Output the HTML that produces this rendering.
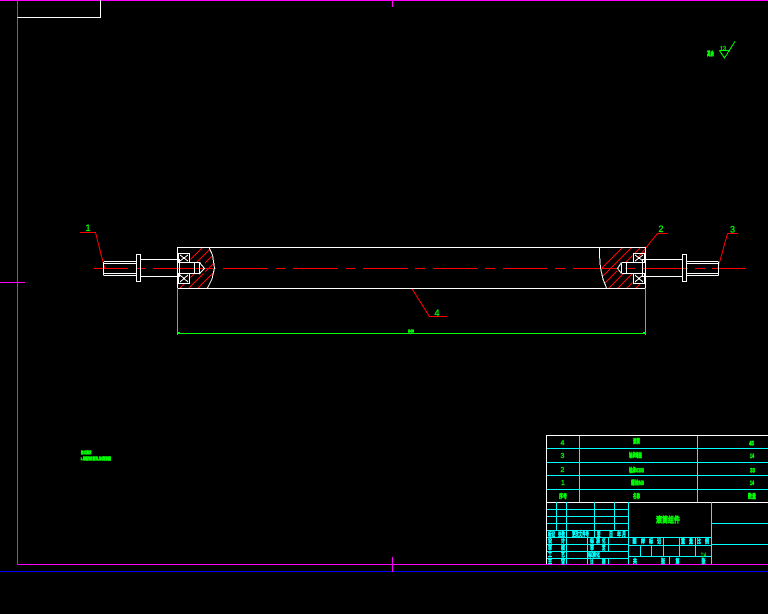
<!DOCTYPE html>
<html>
<head>
<meta charset="utf-8">
<style>
html,body{margin:0;padding:0;background:#000;width:768px;height:614px;overflow:hidden}
svg{display:block}
text{font-family:"Liberation Sans","Noto Sans CJK SC",sans-serif;font-weight:bold;text-anchor:start}
.g{fill:#0f0;stroke:#0f0;stroke-width:.55}
.c{fill:#0ff;stroke:#0ff;stroke-width:.5;font-size:6px}
.n{fill:#0f0;stroke:#0f0;stroke-width:.3;font-weight:normal;text-anchor:middle}
</style>
</head>
<body>
<svg width="768" height="614" viewBox="0 0 768 614" xmlns="http://www.w3.org/2000/svg">
<defs>
<clipPath id="hl"><path clip-rule="evenodd" d="M178 248H209L212 255L214.500 268L212 279L207.500 288H178ZM177 253H190.500V262.500H205V273.500H190.500V283.500H177Z"/></clipPath>
<clipPath id="hr"><path clip-rule="evenodd" d="M599 248H645V288H606.500L602.500 279L600.500 268L600 255ZM646 253H632.500V262.500H617V273.500H632.500V283.500H646Z"/></clipPath>
</defs>
<rect width="768" height="614" fill="#000"/>

<g fill="none" stroke-width="1" shape-rendering="crispEdges">
<!-- sheet frame -->
<path stroke="#00f" d="M0 571.500H768"/>
<path stroke="#f0f" d="M0 .5H768M17.500 0V564.500M17.500 564.500H768M392.500 0V7M392.500 557V572M0 282.500H25"/>
<path stroke="#fff" d="M17.500 17.500H100.500V0"/>

<!-- hatching -->
<g stroke="#f00" clip-path="url(#hl)">
<path d="M150 300L210 240M159 300L219 240M168 300L228 240M177 300L237 240M186 300L246 240M195 300L255 240M204 300L264 240"/>
</g>
<g stroke="#f00" clip-path="url(#hr)">
<path d="M570 300L630 240M579 300L639 240M588 300L648 240M597 300L657 240M606 300L666 240M615 300L675 240M624 300L684 240M633 300L693 240"/>
</g>

<!-- centre line -->
<path stroke="#f00" d="M94 268.500H128M137 268.500H146M153 268.500H216M223 268.500H268M276 268.500H285M293 268.500H338M346 268.500H355M363 268.500H408M415 268.500H425M433 268.500H478M485 268.500H495M503 268.500H547M555 268.500H565M573 268.500H617M625 268.500H635M643 268.500H688M695 268.500H705M712 268.500H746"/>

<!-- leaders -->
<path stroke="#f00" d="M80 232.500H95.500L104.500 268M657 233.500H667.500M657.500 233.500L638 257.500M727 233.500H738M727.500 233.500L718 268M411.500 288L429.500 316.500H447"/>

<!-- roller -->
<path stroke="#fff" d="M177.500 247.500H645.500M177.500 288.500H645.500M177.500 247V288M645.500 247V288"/>
<path stroke="#fff" d="M209 247.500L212.500 255L214.500 268L212 279L207.500 288"/>
<path stroke="#fff" d="M599.500 247.500L599.500 255L600.500 268L603 279L606.500 288"/>

<!-- left shaft -->
<path stroke="#fff" d="M104 261.500H136.500M104 263.500H136.500M104 273.500H136.500M104 275.500H136.500M103.500 262V275.500"/>
<rect stroke="#fff" x="136.500" y="254.500" width="4" height="27"/>
<path stroke="#fff" d="M141 259.500H179M141 276.500H179M179.500 259V277M179 262.500H200.500M179 273.500H200.500M194.500 262.500V273.500M199.500 262.500V273.500L204.500 268.500L199.500 262.500"/>
<rect stroke="#fff" x="178.500" y="253.500" width="11" height="9"/>
<rect stroke="#fff" x="178.500" y="273.500" width="11" height="10"/>
<path stroke="#fff" d="M180 255L188 261M188 255L180 261M180 275L188 282M188 275L180 282"/>

<!-- right shaft -->
<path stroke="#fff" d="M687 261.500H718.500M687 263.500H718.500M687 273.500H718.500M687 275.500H718.500M718.500 262V275.500"/>
<rect stroke="#fff" x="682.500" y="254.500" width="4" height="27"/>
<path stroke="#fff" d="M642 259.500H682M642 276.500H682M642.500 259V277M622 262.500H642M622 273.500H642M621.500 262.500V273.500M626.500 262.500V273.500M621.500 262.500L617.500 268.500L621.500 273.500"/>
<rect stroke="#fff" x="633.500" y="253.500" width="11" height="9"/>
<rect stroke="#fff" x="633.500" y="273.500" width="11" height="10"/>
<path stroke="#fff" d="M635 255L643 261M643 255L635 261M635 275L643 282M643 275L635 282"/>

<!-- dimension -->
<path stroke="#0f0" d="M177.500 289V335M645.500 289V335M177 333.500H646M178 332.500H180M643 332.500H645"/>

<!-- surface finish symbol -->
<path stroke="#0f0" d="M719.500 50.500H730M719.500 50.500L724.500 58L735 41.500"/>

<!-- parts list -->
<path stroke="#0ff" d="M579.500 435V502M697.500 435V502M547 448.500H768M547 462.500H768M547 475.500H768M547 489.500H768"/>
<path stroke="#fff" d="M546.500 435V564M546.500 435.500H768M546.500 502.500H768"/>

<!-- title block -->
<path stroke="#0ff" d="M547 509.500H628M547 516.500H628M547 523.500H628M547 530.500H628M547 537.500H628M547 544.500H628M547 551.500H628M547 558.500H628"/>
<path stroke="#0ff" d="M556.500 502V530M566.500 502V564M594.500 502V537M614.500 502V530M587.500 537V564M608.500 537V551M608.500 558V564M628.500 502V564M711.500 502V564"/>
<path stroke="#0ff" d="M628 537.500H711M628 545.500H711M628 556.500H711M663.500 537V556M679.500 537V556M695.500 537V556M640.500 545V556M651.500 545V556M669.500 556V564M711 523.500H768M711 544.500H768"/>
</g>

<!-- balloons -->
<text class="n" x="88" y="231" font-size="9">1</text>
<text class="n" x="661" y="232" font-size="9">2</text>
<text class="n" x="732.500" y="232.500" font-size="9">3</text>
<text class="n" x="437" y="316" font-size="9">4</text>

<!-- dim / annotation -->
<text class="g" x="408" y="332.500" font-size="4.500" textLength="6" lengthAdjust="spacingAndGlyphs">840</text>
<text class="g" x="707" y="56" font-size="6" textLength="7" lengthAdjust="spacingAndGlyphs">其余</text>
<text class="n" x="723" y="50.500" font-size="6.500" textLength="6" lengthAdjust="spacingAndGlyphs">13</text>
<text class="g" x="81" y="454" font-size="4" textLength="10.500" lengthAdjust="spacingAndGlyphs">技术要求</text>
<text class="g" x="80.500" y="460" font-size="4" textLength="30.500" lengthAdjust="spacingAndGlyphs">1.装配前清洗,涂润滑脂</text>

<!-- parts text -->
<g>
<text class="n" x="562.500" y="445" font-size="7">4</text>
<text class="g" x="633" y="443.500" font-size="6" textLength="7" lengthAdjust="spacingAndGlyphs">滚筒</text>
<text class="g" x="749" y="445.500" font-size="6" textLength="5" lengthAdjust="spacingAndGlyphs">45</text>
<text class="n" x="562.500" y="458" font-size="7">3</text>
<text class="g" x="629" y="457.500" font-size="6" textLength="13" lengthAdjust="spacingAndGlyphs">轴承端盖</text>
<text class="g" x="750" y="458" font-size="6" textLength="4" lengthAdjust="spacingAndGlyphs">14</text>
<text class="n" x="562.500" y="472" font-size="7">2</text>
<text class="g" x="629" y="472.500" font-size="6" textLength="15" lengthAdjust="spacingAndGlyphs">轴承6308</text>
<text class="g" x="750" y="472.500" font-size="6" textLength="5" lengthAdjust="spacingAndGlyphs">33</text>
<text class="n" x="563" y="485" font-size="7">1</text>
<text class="g" x="631" y="485" font-size="6" textLength="13" lengthAdjust="spacingAndGlyphs">螺栓M8</text>
<text class="g" x="750" y="485" font-size="6" textLength="4" lengthAdjust="spacingAndGlyphs">14</text>
<text class="g" x="559" y="498.500" font-size="6" textLength="8" lengthAdjust="spacingAndGlyphs">序号</text>
<text class="g" x="633" y="498.500" font-size="6" textLength="7" lengthAdjust="spacingAndGlyphs">名称</text>
<text class="g" x="748" y="498.500" font-size="6" textLength="8" lengthAdjust="spacingAndGlyphs">数量</text>
<text class="g" x="656" y="522.500" font-size="8" textLength="24" lengthAdjust="spacingAndGlyphs">滚筒组件</text>
<text class="n" x="703.500" y="557" font-size="6" textLength="5" lengthAdjust="spacingAndGlyphs">1:4</text>
</g>

<g>
<text class="c" x="548" y="536.500" textLength="7" lengthAdjust="spacingAndGlyphs">标记</text>
<text class="c" x="558" y="536.500" textLength="7" lengthAdjust="spacingAndGlyphs">处数</text>
<text class="c" x="572" y="536.500" textLength="17" lengthAdjust="spacingAndGlyphs">更改文件号</text>
<text class="c" x="597" y="536.500" textLength="3.500" lengthAdjust="spacingAndGlyphs">签</text>
<text class="c" x="609" y="536.500" textLength="4" lengthAdjust="spacingAndGlyphs">日</text>
<text class="c" x="617" y="536.500" textLength="4" lengthAdjust="spacingAndGlyphs">年</text>
<text class="c" x="622" y="536.500" textLength="4" lengthAdjust="spacingAndGlyphs">月</text>

<text class="c" x="548" y="543" textLength="4" lengthAdjust="spacingAndGlyphs">设</text><text class="c" x="561" y="543" textLength="4" lengthAdjust="spacingAndGlyphs">计</text>
<text class="c" x="590" y="543" textLength="4" lengthAdjust="spacingAndGlyphs">标</text><text class="c" x="596" y="543" textLength="4" lengthAdjust="spacingAndGlyphs">准</text><text class="c" x="602" y="543" textLength="3.500" lengthAdjust="spacingAndGlyphs">化</text>
<text class="c" x="548" y="550" textLength="4" lengthAdjust="spacingAndGlyphs">审</text><text class="c" x="561" y="550" textLength="4" lengthAdjust="spacingAndGlyphs">核</text>
<text class="c" x="590" y="550" textLength="4" lengthAdjust="spacingAndGlyphs">审</text><text class="c" x="602" y="550" textLength="3.500" lengthAdjust="spacingAndGlyphs">定</text>
<text class="c" x="548" y="557" textLength="4" lengthAdjust="spacingAndGlyphs">工</text><text class="c" x="561" y="557" textLength="4" lengthAdjust="spacingAndGlyphs">艺</text>
<text class="c" x="588" y="557" textLength="12" lengthAdjust="spacingAndGlyphs">标准化</text>
<text class="c" x="548" y="563.500" textLength="4" lengthAdjust="spacingAndGlyphs">主</text><text class="c" x="561" y="563.500" textLength="4" lengthAdjust="spacingAndGlyphs">管</text>
<text class="c" x="590" y="563.500" textLength="3.500" lengthAdjust="spacingAndGlyphs">日</text><text class="c" x="602" y="563.500" textLength="3.500" lengthAdjust="spacingAndGlyphs">期</text>

<text class="c" x="632.500" y="543.500" textLength="4" lengthAdjust="spacingAndGlyphs">图</text><text class="c" x="641" y="543.500" textLength="4" lengthAdjust="spacingAndGlyphs">样</text><text class="c" x="649" y="543.500" textLength="4" lengthAdjust="spacingAndGlyphs">标</text><text class="c" x="657" y="543.500" textLength="4" lengthAdjust="spacingAndGlyphs">记</text>
<text class="c" x="681" y="543.500" textLength="4" lengthAdjust="spacingAndGlyphs">重</text><text class="c" x="689" y="543.500" textLength="4" lengthAdjust="spacingAndGlyphs">量</text><text class="c" x="697" y="543.500" textLength="4" lengthAdjust="spacingAndGlyphs">比</text><text class="c" x="705" y="543.500" textLength="4" lengthAdjust="spacingAndGlyphs">例</text>
<text class="c" x="633" y="563.500" textLength="4" lengthAdjust="spacingAndGlyphs">共</text><text class="c" x="661" y="563.500" textLength="4" lengthAdjust="spacingAndGlyphs">张</text><text class="c" x="675.500" y="563.500" textLength="4" lengthAdjust="spacingAndGlyphs">第</text><text class="c" x="701.500" y="563.500" textLength="4" lengthAdjust="spacingAndGlyphs">张</text>
</g>
</svg>
</body>
</html>
